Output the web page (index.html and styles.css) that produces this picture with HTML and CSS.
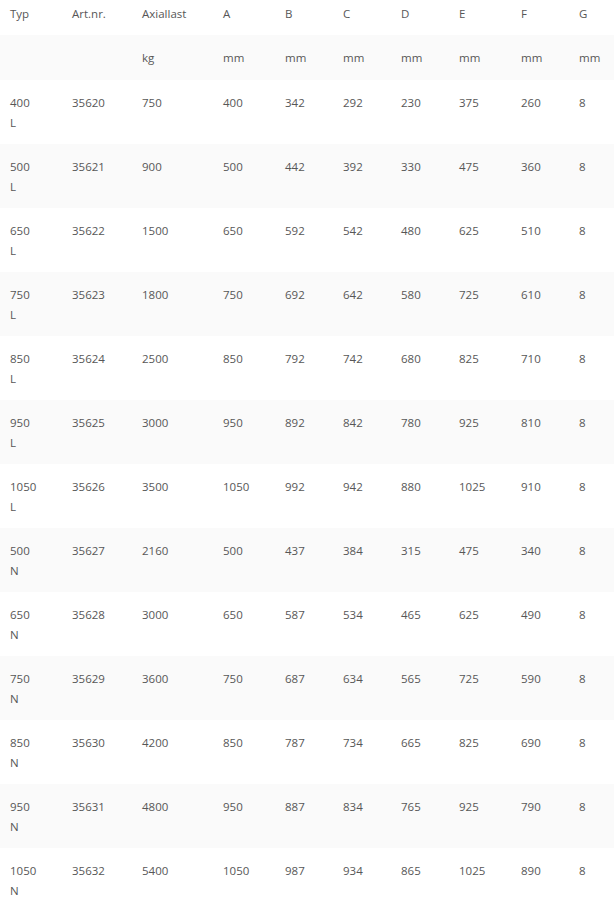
FILE: index.html
```html
<!DOCTYPE html>
<html lang="de">
<head>
<meta charset="utf-8">
<title>Tabelle</title>
<link rel="stylesheet" href="styles.css">
</head>
<body>
<table class="spec">
<colgroup>
<col class="c62"><col class="c70"><col class="c81"><col class="c62"><col class="c58"><col class="c58"><col class="c58"><col class="c62"><col class="c58"><col class="c45">
</colgroup>
<thead>
<tr class="head"><th>Typ</th><th>Art.nr.</th><th>Axiallast</th><th>A</th><th>B</th><th>C</th><th>D</th><th>E</th><th>F</th><th>G</th></tr>
<tr class="units"><th></th><th></th><th>kg</th><th>mm</th><th>mm</th><th>mm</th><th>mm</th><th>mm</th><th>mm</th><th>mm</th></tr>
</thead>
<tbody>
<tr><td>400<br>L</td><td>35620</td><td>750</td><td>400</td><td>342</td><td>292</td><td>230</td><td>375</td><td>260</td><td>8</td></tr>
<tr><td>500<br>L</td><td>35621</td><td>900</td><td>500</td><td>442</td><td>392</td><td>330</td><td>475</td><td>360</td><td>8</td></tr>
<tr><td>650<br>L</td><td>35622</td><td>1500</td><td>650</td><td>592</td><td>542</td><td>480</td><td>625</td><td>510</td><td>8</td></tr>
<tr><td>750<br>L</td><td>35623</td><td>1800</td><td>750</td><td>692</td><td>642</td><td>580</td><td>725</td><td>610</td><td>8</td></tr>
<tr><td>850<br>L</td><td>35624</td><td>2500</td><td>850</td><td>792</td><td>742</td><td>680</td><td>825</td><td>710</td><td>8</td></tr>
<tr><td>950<br>L</td><td>35625</td><td>3000</td><td>950</td><td>892</td><td>842</td><td>780</td><td>925</td><td>810</td><td>8</td></tr>
<tr><td>1050<br>L</td><td>35626</td><td>3500</td><td>1050</td><td>992</td><td>942</td><td>880</td><td>1025</td><td>910</td><td>8</td></tr>
<tr><td>500<br>N</td><td>35627</td><td>2160</td><td>500</td><td>437</td><td>384</td><td>315</td><td>475</td><td>340</td><td>8</td></tr>
<tr><td>650<br>N</td><td>35628</td><td>3000</td><td>650</td><td>587</td><td>534</td><td>465</td><td>625</td><td>490</td><td>8</td></tr>
<tr><td>750<br>N</td><td>35629</td><td>3600</td><td>750</td><td>687</td><td>634</td><td>565</td><td>725</td><td>590</td><td>8</td></tr>
<tr><td>850<br>N</td><td>35630</td><td>4200</td><td>850</td><td>787</td><td>734</td><td>665</td><td>825</td><td>690</td><td>8</td></tr>
<tr><td>950<br>N</td><td>35631</td><td>4800</td><td>950</td><td>887</td><td>834</td><td>765</td><td>925</td><td>790</td><td>8</td></tr>
<tr><td>1050<br>N</td><td>35632</td><td>5400</td><td>1050</td><td>987</td><td>934</td><td>865</td><td>1025</td><td>890</td><td>8</td></tr>
</tbody>
</table>
</body>
</html>
```
FILE: styles.css
```css
html, body {
  margin: 0;
  padding: 0;
  background: #fff;
}
body {
  font-family: "Open Sans", "Noto Sans", sans-serif;
  font-size: 11.5px;
  line-height: 20px;
  color: #575757;
}
.spec {
  width: 614px;
  border-collapse: collapse;
  table-layout: fixed;
}
.c62 { width: 62px; }
.c70 { width: 70px; }
.c81 { width: 81px; }
.c58 { width: 58px; }
.c45 { width: 45px; }
.spec th,
.spec td {
  text-align: left;
  vertical-align: top;
  font-weight: 400;
  padding: 13px 10px 11px;
}
.spec .head th {
  padding: 4px 10px 11px;
}
.spec tbody tr:nth-child(odd) {
  background: #fff;
}
.spec tbody tr:nth-child(even) {
  background: #fafafa;
}
.units th {
  background: #fafafa;
  padding: 13px 10px 12px;
}
```
